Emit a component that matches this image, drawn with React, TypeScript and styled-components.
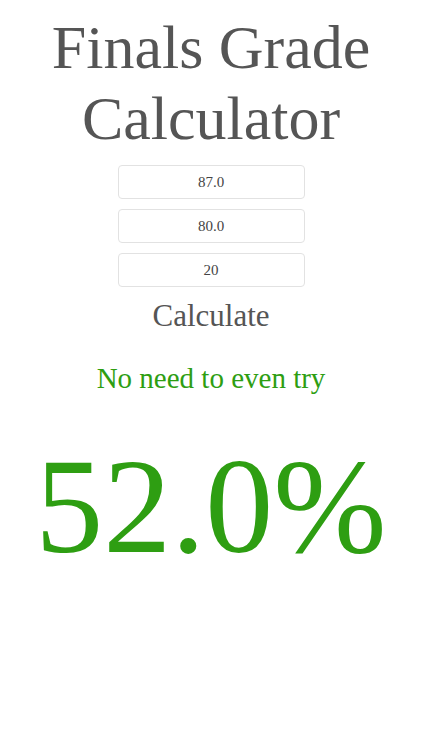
import React, { useState } from "react";
import styled, { createGlobalStyle } from "styled-components";

const GlobalStyle = createGlobalStyle`
  body {
    margin: 0;
    background: #ffffff;
    font-family: "Liberation Serif", "Times New Roman", serif;
  }
`;

const Page = styled.main`
  display: flex;
  flex-direction: column;
  align-items: center;
  padding-top: 12px;
`;

const Title = styled.h1`
  margin: 0;
  font-size: 62px;
  font-weight: normal;
  line-height: 71px;
  color: #555555;
  text-align: center;
`;

const Form = styled.div`
  display: flex;
  flex-direction: column;
  gap: 10px;
  margin-top: 11px;
`;

const Field = styled.input`
  box-sizing: border-box;
  width: 187px;
  height: 34px;
  border: 1px solid #e2e2e2;
  border-radius: 4px;
  text-align: center;
  font-family: "Liberation Serif", "Times New Roman", serif;
  font-size: 15px;
  color: #444444;
  background: #ffffff;
  outline: none;
`;

const CalcButton = styled.button`
  margin-top: 11px;
  border: none;
  background: none;
  padding: 0;
  font-family: "Liberation Serif", "Times New Roman", serif;
  font-size: 31px;
  color: #555555;
  line-height: 36px;
  cursor: pointer;
`;

const Verdict = styled.p`
  margin: 28px 0 0;
  font-size: 29px;
  color: #2e9e12;
`;

const Result = styled.div`
  margin-top: 36px;
  font-size: 136px;
  line-height: 150px;
  color: #2e9e12;
`;

export default function App() {
  const [current, setCurrent] = useState("87.0");
  const [target, setTarget] = useState("80.0");
  const [weight, setWeight] = useState("20");

  return (
    <Page>
      <GlobalStyle />
      <Title>
        Finals Grade
        <br />
        Calculator
      </Title>
      <Form>
        <Field value={current} onChange={(e) => setCurrent(e.target.value)} />
        <Field value={target} onChange={(e) => setTarget(e.target.value)} />
        <Field value={weight} onChange={(e) => setWeight(e.target.value)} />
      </Form>
      <CalcButton>Calculate</CalcButton>
      <Verdict>No need to even try</Verdict>
      <Result>52.0%</Result>
    </Page>
  );
}
